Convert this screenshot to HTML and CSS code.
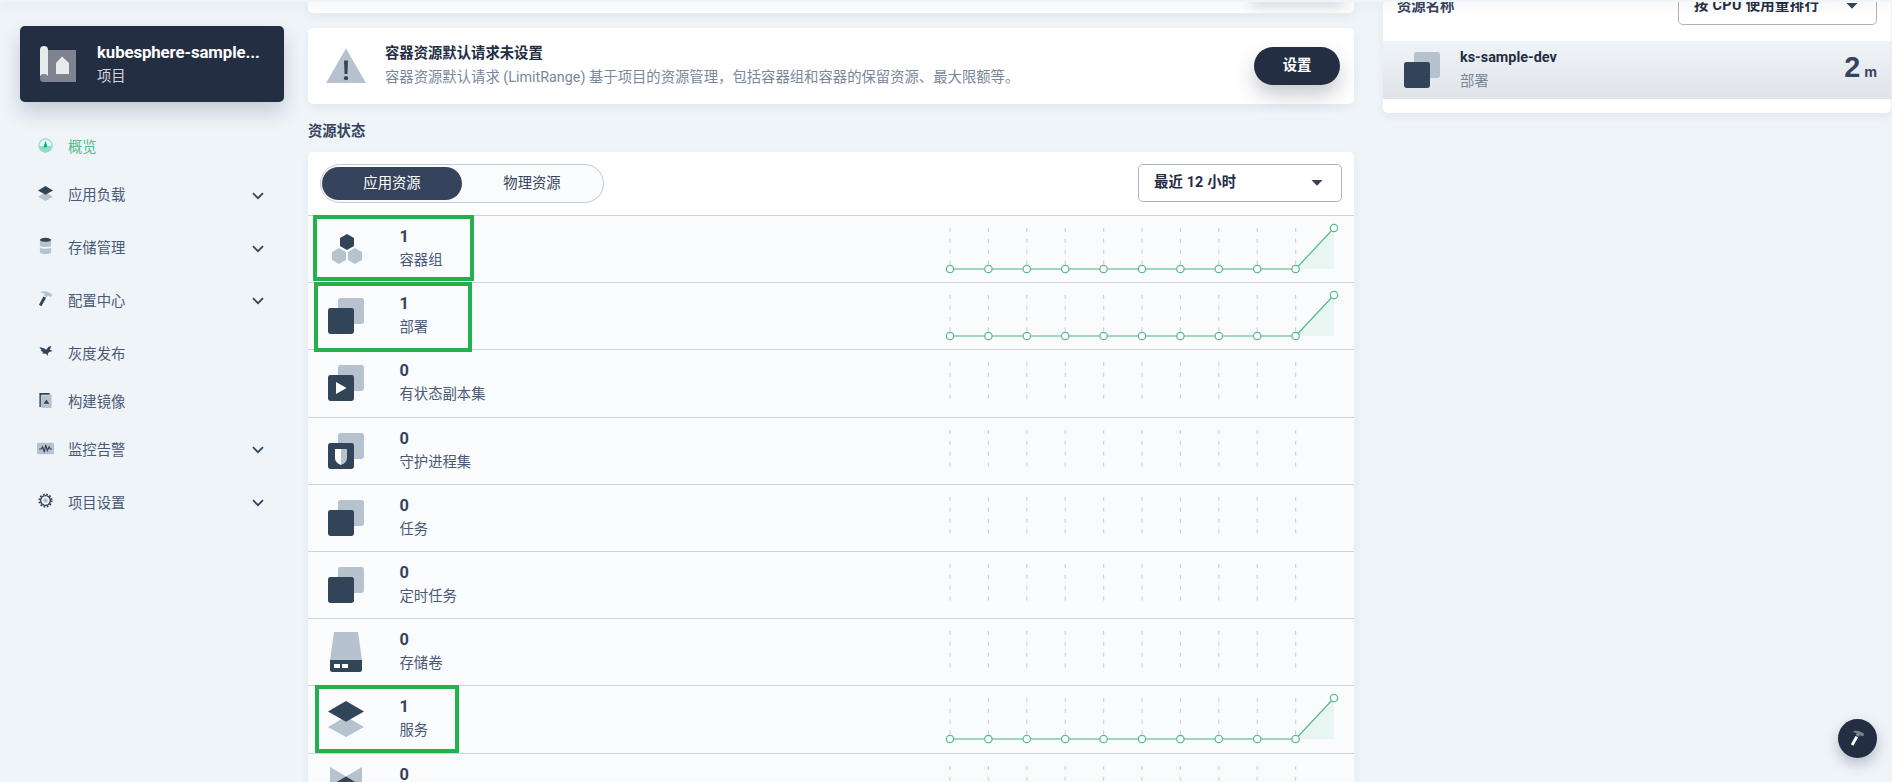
FILE: index.html
```
<!DOCTYPE html>
<html lang="zh-CN">
<head>
<meta charset="utf-8">
<title>项目概览</title>
<link rel="stylesheet" href="styles.css">
</head>
<body>
<svg class="defs" aria-hidden="true">
  <symbol id="chevron" viewBox="0 0 12 8"><path d="M1 1.2 6 6.2 11 1.2" fill="none" stroke="#324558" stroke-width="1.8"/></symbol>
  <symbol id="caret" viewBox="0 0 12 6"><path d="M.5 0h11L6.5 5.2a.8.8 0 0 1-1 0z" fill="#36435c"/></symbol>
  <symbol id="deploy" viewBox="0 0 36 36"><rect x="10" width="26" height="26" rx="2.4" fill="#b6c2cd"/><rect y="10" width="26" height="26" rx="2.4" fill="#324558"/></symbol>
  <symbol id="stateful" viewBox="0 0 36 36"><use href="#deploy" width="36" height="36"/><path d="M8 17v12l10.500-6z" fill="#fff"/></symbol>
  <symbol id="daemon" viewBox="0 0 36 36"><use href="#deploy" width="36" height="36"/><path d="M7 16h6v16c-4-1.500-6-4-6-7z" fill="#fff"/><path d="M13 16h6v9c0 3-2 5.500-6 7z" fill="#b6c2cd"/></symbol>
  <symbol id="pods" viewBox="0 0 36 36"><path d="M19 3l7 4v8l-7 4-7-4V7z" fill="#324558"/><path d="M11 17l7 4v8l-7 4-7-4v-8zM27 17l7 4v8l-7 4-7-4v-8z" fill="#b6c2cd"/></symbol>
  <symbol id="volume" viewBox="0 0 36 40"><path d="M6 0h24l4 28H2z" fill="#b6c2cd"/><path d="M2 28h32v9.500a2.500 2.500 0 0 1-2.500 2.500h-27A2.500 2.500 0 0 1 2 37.500z" fill="#324558"/><path d="M6 32h6v4H6zM14 32h6v4h-6z" fill="#fff"/></symbol>
  <symbol id="service" viewBox="0 0 36 36"><path d="M18 15.500 36 26 18 36 0 26z" fill="#b6c2cd"/><path d="M18 0 36 10.500 18 20.700 0 10.500z" fill="#324558"/></symbol>
  <symbol id="route" viewBox="0 0 36 40"><path d="M2 0l16 9.500L34 0v38L18 28 2 38z" fill="#b6c2cd"/><path d="M18 9.500l16 9.500-16 9.500L2 19z" fill="#324558"/></symbol>
  <symbol id="hammer" viewBox="0 0 16 18"><path d="M2.500 2.300C5 .5 8.500.400 11 1.800l3.600 1.700.2 1.900-1.700 1.400-1.600-1.200-1.300.2L9.500 7 6.300 5.500l.7-2.300c-1.500-.8-3-.9-4.500-.9z" fill="#b6c2cd"/><path d="M5.800 6.200 8.700 7.700 3.600 16.600 1 15.200z" fill="#324558"/></symbol>
  <symbol id="grid" viewBox="0 0 400 54" overflow="visible"><path d="M8 12v37.500M46.400 12v37.500M84.800 12v37.500M123.200 12v37.500M161.600 12v37.500M200 12v37.500M238.400 12v37.500M276.800 12v37.500M315.200 12v37.500M353.600 12v37.500" stroke="#d0d2d4" stroke-width="1.200" stroke-dasharray="4 6.850"/></symbol>
  <symbol id="trend" viewBox="0 0 400 54" overflow="visible"><use href="#grid" width="400" height="54"/><path d="M353.600 53 392 12v41z" fill="#e8f5f0"/><path d="M8 53H353.600" fill="none" stroke="#55bc8a" stroke-opacity=".55" stroke-width="2"/><path d="M353.600 53 392 12" stroke="#55bc8a" stroke-width="1.200"/><g fill="#fff" stroke="#55bc8a" stroke-width="1.200"><circle cx="8" cy="53" r="3.700"/><circle cx="46.400" cy="53" r="3.700"/><circle cx="84.800" cy="53" r="3.700"/><circle cx="123.200" cy="53" r="3.700"/><circle cx="161.600" cy="53" r="3.700"/><circle cx="200" cy="53" r="3.700"/><circle cx="238.400" cy="53" r="3.700"/><circle cx="276.800" cy="53" r="3.700"/><circle cx="315.200" cy="53" r="3.700"/><circle cx="353.600" cy="53" r="3.700"/><circle cx="392" cy="12" r="3.700"/></g></symbol>
</svg>

<div class="topbar"></div>
<div class="layout">
  <aside class="sidebar">
    <div class="project">
      <svg class="project-icon" viewBox="0 0 36 36"><path d="M6 4h30v32H4z" fill="#7e838f"/><path d="M0 4a4 4 0 0 1 8 0v26H0z" fill="#e9eaec"/><rect y="28" width="8" height="8" rx="3.500" fill="#7e838f"/><path d="M16 17l6-6.500 7 6.500v11H16z" fill="#e9eaec"/></svg>
      <div class="project-text"><strong>kubesphere-sample...</strong><span>项目</span></div>
    </div>
    <nav class="nav">
      <a class="item active"><svg class="ico" viewBox="0 0 16 16"><circle cx="8" cy="8" r="7" fill="#e9f8f3" stroke="#8fe0c3" stroke-width="1.400"/><path d="M1 8.500h14a7 7 0 0 1-14 0z" fill="#8fe0c3"/><path d="M8 3l1.700 5.500a1.700 1.700 0 1 1-3.400 0z" fill="#00aa72"/></svg><span>概览</span></a>
      <a class="item sub"><svg class="ico" viewBox="0 0 36 36"><use href="#service"/></svg><span>应用负载</span><svg class="chev"><use href="#chevron"/></svg></a>
      <a class="item sub"><svg class="ico tall" viewBox="0 0 14 18"><path d="M1.400 3h11.200v6c-2 1.300-9.200 1.300-11.200 0zM1.400 10.800c3 1.300 8.200 1.300 11.200 0v5c-2 1.900-9.200 1.900-11.200 0z" fill="#b6c2cd"/><ellipse cx="7" cy="2.800" rx="5.600" ry="2" fill="#324558"/></svg><span>存储管理</span><svg class="chev"><use href="#chevron"/></svg></a>
      <a class="item sub"><svg class="ico tall"><use href="#hammer"/></svg><span>配置中心</span><svg class="chev"><use href="#chevron"/></svg></a>
      <a class="item"><svg class="ico" viewBox="0 0 16 16"><path d="M1.500 3.200 7 4.800 8.500 6l3.200-3.300 2.500-.2-1.600 3.300 2.900 1.700-3.300 1-1.600 1.300.1 3-2.200-2.300-4-.5 1-1.400-3-1.400 1.300-.500z" fill="#324558"/></svg><span>灰度发布</span></a>
      <a class="item"><svg class="ico tall" viewBox="0 0 16 18"><path d="M1.500 1.500h11v2h-9v13h-2z" fill="#324558"/><path d="M3 4h9V3h1.500a1 1 0 0 1 1 1v12.500a1 1 0 0 1-1 1H4.500l-1.500-1z" fill="#b6c2cd"/><path d="M9 8.500l3 4.500H6z" fill="#324558"/></svg><span>构建镜像</span></a>
      <a class="item sub"><svg class="ico wide" viewBox="0 0 16 16"><rect y="2.500" width="16" height="11" rx="1" fill="#b6c2cd"/><path d="M2 8.500h2l1.300-2 1.600 5 1.300-7 1.500 5.500 1.700-3.500 1 2H14" fill="none" stroke="#324558" stroke-width="1.100"/></svg><span>监控告警</span><svg class="chev"><use href="#chevron"/></svg></a>
      <a class="item sub"><svg class="ico" viewBox="0 0 16 16"><circle cx="8" cy="8" r="6.600" fill="none" stroke="#324558" stroke-width="2" stroke-dasharray="1.750 1.705"/><circle cx="8" cy="8" r="5.200" fill="none" stroke="#324558" stroke-width="1.500"/><circle cx="8" cy="8" r="2.500" fill="#b6c2cd"/></svg><span>项目设置</span><svg class="chev"><use href="#chevron"/></svg></a>
    </nav>
  </aside>

  <main class="main">
    <section class="card clipped"><span class="button-shade"></span></section>
    <section class="card tip">
      <svg class="warn" viewBox="0 0 40 36"><path d="M20 0.500 40 35H0z" fill="#b6c2cd"/><path d="M18 12.500h4l-.6 13.500h-2.800z" fill="#324558"/><circle cx="20" cy="30.200" r="2.100" fill="#324558"/></svg>
      <div class="tip-text"><strong>容器资源默认请求未设置</strong><p>容器资源默认请求 (LimitRange) 基于项目的资源管理，包括容器组和容器的保留资源、最大限额等。</p></div>
      <button class="primary">设置</button>
    </section>
    <h2 class="title">资源状态</h2>
    <section class="card panel">
      <header class="toolbar">
        <div class="tabs"><span class="tab on">应用资源</span><span class="tab">物理资源</span></div>
        <div class="select"><span>最近 12 小时</span><svg class="caret"><use href="#caret"/></svg></div>
      </header>
      <div class="row"><svg class="kind"><use href="#pods"/></svg><div class="stat"><b>1</b><span>容器组</span></div><svg class="chart"><use href="#trend"/></svg><i class="mark mark-pods"></i></div>
      <div class="row"><svg class="kind"><use href="#deploy"/></svg><div class="stat"><b>1</b><span>部署</span></div><svg class="chart"><use href="#trend"/></svg><i class="mark mark-deploy"></i></div>
      <div class="row"><svg class="kind"><use href="#stateful"/></svg><div class="stat"><b>0</b><span>有状态副本集</span></div><svg class="chart"><use href="#grid"/></svg></div>
      <div class="row"><svg class="kind"><use href="#daemon"/></svg><div class="stat"><b>0</b><span>守护进程集</span></div><svg class="chart"><use href="#grid"/></svg></div>
      <div class="row"><svg class="kind"><use href="#deploy"/></svg><div class="stat"><b>0</b><span>任务</span></div><svg class="chart"><use href="#grid"/></svg></div>
      <div class="row"><svg class="kind"><use href="#deploy"/></svg><div class="stat"><b>0</b><span>定时任务</span></div><svg class="chart"><use href="#grid"/></svg></div>
      <div class="row"><svg class="kind high"><use href="#volume"/></svg><div class="stat"><b>0</b><span>存储卷</span></div><svg class="chart"><use href="#grid"/></svg></div>
      <div class="row"><svg class="kind"><use href="#service"/></svg><div class="stat"><b>1</b><span>服务</span></div><svg class="chart"><use href="#trend"/></svg><i class="mark mark-service"></i></div>
      <div class="row last"><svg class="kind high"><use href="#route"/></svg><div class="stat"><b>0</b></div><svg class="chart"><use href="#grid"/></svg></div>
    </section>
  </main>

  <aside class="card usage">
    <header class="usage-head"><span class="usage-title">资源名称</span><div class="select"><span>按 CPU 使用量排行</span><svg class="caret"><use href="#caret"/></svg></div></header>
    <div class="usage-row"><svg class="kind"><use href="#deploy"/></svg><div class="usage-name"><strong>ks-sample-dev</strong><span>部署</span></div><div class="usage-value">2<small>m</small></div></div>
  </aside>
</div>
<button class="fab"><svg viewBox="0 0 16 18"><path d="M2.500 2.300C5 .5 8.500.400 11 1.800l3.600 1.700.2 1.900-1.700 1.400-1.600-1.200-1.300.2L9.500 7 6.300 5.500l.7-2.300c-1.500-.8-3-.9-4.500-.9z" fill="#7e838f"/><path d="M5.800 6.200 8.700 7.700 3.600 16.600 1 15.200z" fill="#fff"/></svg></button>
</body>
</html>
```

FILE: styles.css
```
* { box-sizing: border-box; }
body {
  margin: 0;
  height: 782px;
  overflow: hidden;
  background: #eff4f9;
  color: #36435c;
  font: 14.35px/24px Roboto, "Noto Sans CJK SC", sans-serif;
}
strong, h2, b { font-weight: 700; }
button { border: 0; font: inherit; }
svg { display: block; flex: none; }
.defs { position: absolute; width: 0; height: 0; }

.topbar {
  position: absolute;
  z-index: 5;
  top: 0;
  left: 0;
  right: 0;
  height: 2px;
  background: #eff4f9;
  box-shadow: 0 4px 10px rgba(36, 46, 66, .12);
}
.layout { display: flex; height: 782px; overflow: hidden; }

.sidebar { width: 308px; padding: 26px 24px 0 20px; flex: none; }
.project {
  display: flex;
  gap: 21px;
  height: 76px;
  padding: 20px;
  border-radius: 4.8px;
  background: #242e42;
  box-shadow: 0 10px 20px rgba(36, 46, 66, .2);
  color: #fff;
}
.project-icon { width: 36px; height: 36px; }
.project-text { display: flex; flex-direction: column; margin-top: -6px; white-space: nowrap; }
.project-text strong { font-size: 16.8px; letter-spacing: -.1px; }
.project-text span { line-height: 25px; color: #d3d5d9; }

.nav { display: flex; flex-direction: column; padding: 21.600px 0 0 16px; }
.item { display: flex; align-items: flex-start; height: 48px; padding: 12.800px 20px 0 2px; color: #4a5974; }
.item.sub { height: 52.8px; }
.item .ico { width: 15px; height: 15px; margin: 1.600px 15px 0 0; }
.item .ico.tall { height: 18px; margin-top: 0; }
.item .ico.wide { width: 17px; height: 17px; margin: 1px 14px 0 -1px; }
.item .chev { width: 12px; height: 8px; margin: 7.500px 0 0 auto; }
.item.active { color: #55bc8a; }

.main { width: 1046px; flex: none; }
.card { background: #fff; border-radius: 4.8px; box-shadow: 0 4px 8px rgba(36, 46, 66, .06); }
.clipped { display: flex; justify-content: flex-end; height: 13px; padding-right: 14px; border-radius: 0 0 4.8px 4.8px; overflow: hidden; }
.button-shade { width: 86px; height: 1px; border-radius: 19px; box-shadow: 0 0 14px 3px rgba(35, 45, 65, .3); }
.tip { display: flex; height: 76px; margin-top: 15px; padding: 0 14px 0 18px; }
.warn { width: 40px; height: 36px; margin-top: 20px; }
.tip-text { margin: 14px auto 0 19px; }
.tip-text strong { display: block; color: #242e42; }
.tip-text p { margin: 0; color: #79879c; }
.primary {
  width: 86px;
  height: 38px;
  margin-top: 19px;
  border-radius: 19px;
  background: #242e42;
  box-shadow: 0 10px 19px rgba(35, 45, 65, .25);
  color: #fff;
  font-weight: 700;
}
.title { margin: 15px 0 9px; font-size: 14.3px; line-height: 24px; }

.panel { height: 630px; border-radius: 4.8px 4.8px 0 0; background: #f9fbfd; }
.toolbar { display: flex; justify-content: space-between; height: 63px; padding: 12px 12px 0; background: #fff; border-radius: 4.8px 4.8px 0 0; }
.tabs { display: flex; width: 284px; height: 39px; padding: 2px 1px; border: 1px solid #c1c9d1; border-radius: 20px; background: #f9fbfd; }
.tab { width: 141px; height: 33px; border-radius: 17px; line-height: 33px; text-align: center; }
.tab.on { background: #36435c; color: #fff; }
.select {
  display: flex;
  align-items: center;
  justify-content: space-between;
  width: 204px;
  height: 38px;
  padding: 0 18px 0 15px;
  border: 1px solid #abb4be;
  border-radius: 4.8px;
  background: #fff;
  color: #242e42;
  font-weight: 700;
  letter-spacing: .15px;
}
.caret { width: 12px; height: 6px; }

.row { position: relative; display: flex; height: 67.2px; padding: 0 12px 0 20px; border-top: 1px solid #ccd3db; }
.row.last { overflow: hidden; }
.kind { width: 36px; height: 36px; margin-top: 15px; }
.kind.high { height: 40px; margin-top: 13px; }
.stat { display: flex; flex-direction: column; margin-left: 35.5px; padding-top: 8px; }
.stat b { font-size: 16.4px; line-height: 25px; }
.stat span { line-height: 24.5px; color: #4a5974; }
.chart { width: 400px; height: 54px; margin-left: auto; overflow: visible; }
.mark { position: absolute; z-index: 2; top: -1px; height: 66px; border: 4px solid #22b14c; }
.mark-pods { left: 5px; width: 161px; }
.mark-deploy { left: 6px; width: 158px; height: 70px; }
.mark-service { left: 7px; width: 144px; height: 68px; }

.usage { width: 508px; height: 113px; margin-left: 29px; flex: none; }
.usage-head { display: flex; justify-content: space-between; height: 41px; padding: 0 14px; }
.usage-title { margin-top: -5px; font-weight: 700; }
.usage-head .select { width: 199px; margin-top: -13px; letter-spacing: .35px; }
.usage-row { display: flex; height: 58px; padding: 0 14px 0 21px; background: linear-gradient(#eff4f9, #e0e4e9); }
.usage-row .kind { margin-top: 11px; }
.usage-name { display: flex; flex-direction: column; margin: 5px auto 0 20px; }
.usage-name strong { color: #242e42; font-size: 14.4px; }
.usage-name span { color: #79879c; }
.usage-value { font-family: "Liberation Sans", sans-serif; font-size: 28.8px; font-weight: 700; line-height: 52px; }
.usage-value small { margin-left: 4px; font-size: 14.4px; }

.fab {
  position: absolute;
  z-index: 4;
  right: 15px;
  bottom: 24px;
  display: grid;
  place-items: center;
  width: 39px;
  height: 39px;
  padding: 0;
  border-radius: 50%;
  background: #242e42;
  box-shadow: 0 6px 14px rgba(36, 46, 66, .28);
}
.fab svg { width: 15px; height: 17px; }
```
